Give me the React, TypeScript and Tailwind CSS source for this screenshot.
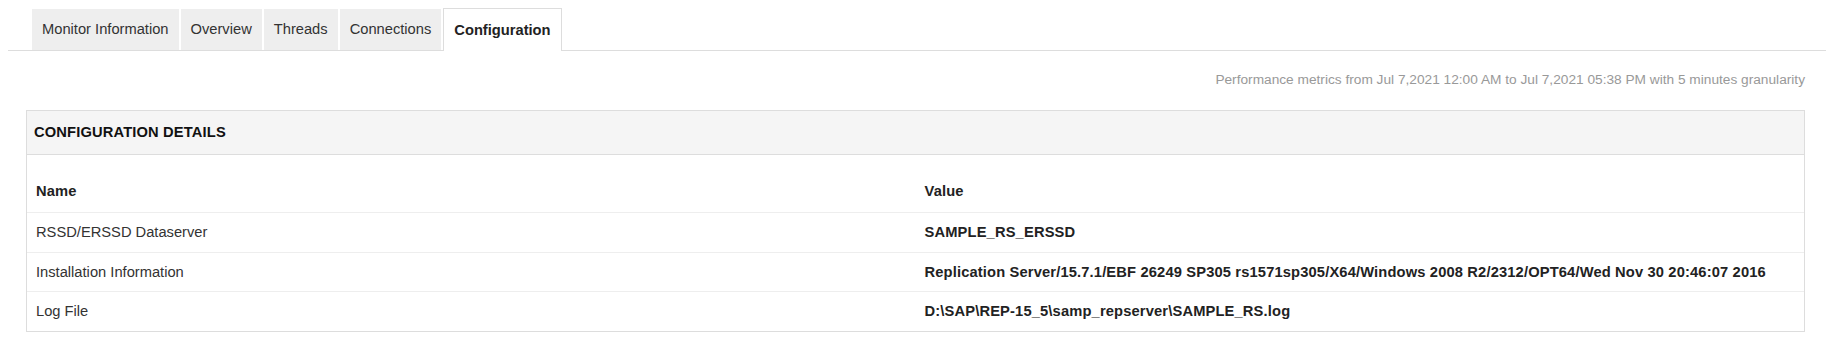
import React from "react";

const tabs = ["Monitor Information", "Overview", "Threads", "Connections", "Configuration"];

const rows = [
  { name: "RSSD/ERSSD Dataserver", value: "SAMPLE_RS_ERSSD" },
  {
    name: "Installation Information",
    value:
      "Replication Server/15.7.1/EBF 26249 SP305 rs1571sp305/X64/Windows 2008 R2/2312/OPT64/Wed Nov 30 20:46:07 2016",
  },
  { name: "Log File", value: "D:\\SAP\\REP-15_5\\samp_repserver\\SAMPLE_RS.log" },
];

export default function App() {
  const active = "Configuration";

  return (
    <div className="min-h-[344px] bg-white px-2 text-[14.7px] text-[#333] font-['Liberation_Sans',Arial,sans-serif]">
      <ul className="flex items-end gap-[2px] border-b border-[#ddd] pl-6 pt-2">
        {tabs.map((tab) =>
          tab === active ? (
            <li
              key={tab}
              className="-mb-px flex h-[43px] items-center border border-b-0 border-[#ddd] bg-white px-[10px] font-bold text-[#222]"
            >
              {tab}
            </li>
          ) : (
            <li key={tab} className="flex h-[41px] items-center bg-[#eeeeee] px-[10px] text-[#333]">
              {tab}
            </li>
          )
        )}
      </ul>

      <div className="ml-[18px] mr-[21px]">
        <div className="mt-[19px] flex h-5 items-center justify-end text-[13.7px] text-[#999]">
          Performance metrics from Jul 7,2021 12:00 AM to Jul 7,2021 05:38 PM with 5 minutes granularity
        </div>

        <div className="mt-5 border border-[#ddd]">
          <div className="flex h-[44px] items-center border-b border-[#ddd] bg-[#f5f5f5] px-[7px] font-bold tracking-[0.15px] text-[#111]">
            CONFIGURATION DETAILS
          </div>

          <div className="pt-[15px]">
            <div className="grid h-[42px] grid-cols-2 items-center font-bold tracking-[0.15px] text-[#222]">
              <div className="px-[9px]">Name</div>
              <div className="px-[9px]">Value</div>
            </div>
            {rows.map((row) => (
              <div key={row.name} className="grid h-[39.5px] grid-cols-2 items-center border-t border-[#eeeeee]">
                <div className="px-[9px]">{row.name}</div>
                <div className="px-[9px] font-bold tracking-[0.15px] text-[#222]">{row.value}</div>
              </div>
            ))}
          </div>
        </div>
      </div>
    </div>
  );
}
